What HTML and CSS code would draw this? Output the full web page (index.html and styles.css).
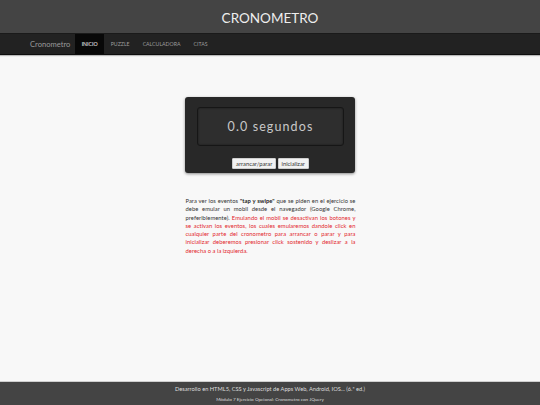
FILE: index.html
```html
<!DOCTYPE html>
<html lang="es">
<head>
<meta charset="utf-8">
<title>Cronometro</title>
<link rel="stylesheet" href="styles.css">
</head>
<body>
<header class="top">
  <h1 class="title">CRONOMETRO</h1>
</header>
<nav class="navbar">
  <div class="nav-inner">
    <span class="brand">Cronometro</span>
    <a class="nav-link active">INICIO</a>
    <a class="nav-link">PUZZLE</a>
    <a class="nav-link">CALCULADORA</a>
    <a class="nav-link">CITAS</a>
  </div>
</nav>
<main class="main">
  <section class="chrono">
    <div class="display">0.0 segundos</div>
    <div class="buttons">
      <button class="btn">arrancar/parar</button>
      <button class="btn">inicializar</button>
    </div>
  </section>
  <p class="info">Para ver los eventos <b>"tap y swipe"</b> que se piden en el ejercicio se debe emular un mobil desde el navegador (Google Chrome, preferiblemente). <span class="red">Emulando el mobil se desactivan los botones y se activan los eventos, los cuales emularemos dandole click en cualquier parte del cronometro para arrancar o parar y para inicializar deberemos presionar click sostenido y deslizar a la derecha o a la izquierda.</span></p>
</main>
<footer class="footer">
  <div class="f1">Desarrollo en HTML5, CSS y Javascript de Apps Web, Android, IOS... (6.ª ed.)</div>
  <div class="f2">Módulo 7 Ejercicio Opcional: Cronometro con JQuery</div>
</footer>
</body>
</html>
```

FILE: styles.css
```css
* { box-sizing: border-box; }
html, body { margin: 0; padding: 0; }
body {
  width: 540px;
  height: 405px;
  background: #f8f8f8;
  font-family: Lato, "Open Sans", sans-serif;
  display: flex;
  flex-direction: column;
  overflow: hidden;
}
.top {
  height: 33px;
  background: #444444;
  display: flex;
  align-items: center;
  justify-content: center;
}
.title {
  margin: 0;
  font-size: 13.5px;
  font-weight: 400;
  color: #eeeeee;
  padding-top: 2px;
}
.navbar {
  height: 22px;
  background: #222222;
  border-top: 1px solid #1a1a1a;
  border-bottom: 1px solid #0e0e0e;
  box-shadow: 0 1px 1px rgba(0,0,0,0.25);
}
.nav-inner {
  height: 100%;
  padding-left: 30px;
  display: flex;
  align-items: stretch;
}
.brand {
  font-size: 7.6px;
  color: #999999;
  display: flex;
  align-items: center;
  margin-right: 5px;
}
.nav-link {
  display: flex;
  align-items: center;
  padding: 0 6.3px;
  font-size: 5.2px;
  color: #9d9d9d;
  margin-right: 0.5px;
}
.nav-link.active {
  background: #080808;
  color: #ffffff;
}
.main {
  flex: 1;
  display: flex;
  flex-direction: column;
  align-items: center;
  padding-top: 42px;
}
.chrono {
  width: 170px;
  height: 76px;
  background: #282828;
  border-radius: 3px;
  box-shadow: 0 1px 3px rgba(0,0,0,0.45);
  padding: 10px 11px 0 12px;
  display: flex;
  flex-direction: column;
}
.display {
  height: 39px;
  background: #2e2e2e;
  border: 1px solid #161616;
  border-radius: 3px;
  box-shadow: inset 0 0 2px rgba(0,0,0,0.5);
  display: flex;
  align-items: center;
  justify-content: center;
  color: #c8c8c8;
  font-size: 12.5px;
  letter-spacing: 1.1px;
}
.buttons {
  display: flex;
  justify-content: center;
  gap: 2px;
  margin-top: 12px;
}
.btn {
  height: 11px;
  padding: 0 2.6px;
  background: #f2f2f2;
  border: 1px solid #cfcfcf;
  border-radius: 1px;
  font-family: inherit;
  font-size: 5.8px;
  color: #333333;
  line-height: 1;
}
.info {
  width: 170px;
  margin: 24px 0 0 1px;
  font-size: 5.8px;
  line-height: 8.3px;
  letter-spacing: 0.05px;
  color: #333333;
  text-align: justify;
}
.info b { color: #222; }
.red { color: #e3262c; }
.footer {
  height: 24px;
  background: #444444;
  border-top: 1px solid #cfcfcf;
  display: flex;
  flex-direction: column;
  align-items: center;
  color: #dddddd;
}
.f1 {
  font-size: 5.7px;
  margin-top: 3px;
}
.f2 {
  font-size: 4.6px;
  margin-top: 4px;
}
```
